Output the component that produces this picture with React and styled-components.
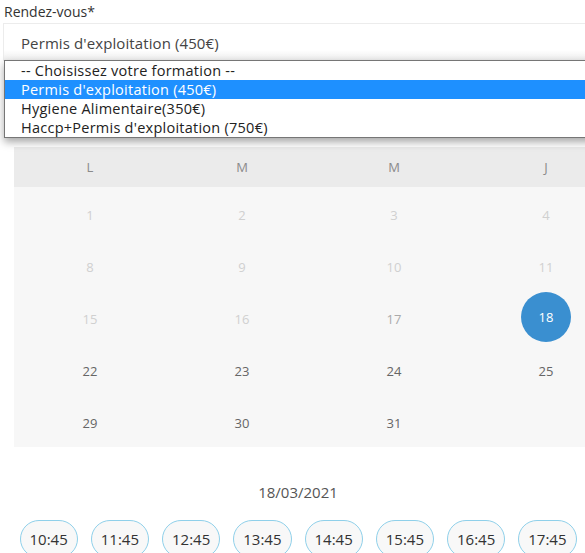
import React from "react";
import styled, { createGlobalStyle } from "styled-components";

const GlobalStyle = createGlobalStyle`
    body {
        margin: 0;
        background: #fff;
        overflow: hidden;
        font-family: "Open Sans", "Noto Sans", sans-serif;
    }
`;

const Page = styled.div`
    width: 1100px;
    position: relative;
`;

const Label = styled.div`
    font-size: 14px;
    color: #333;
    padding: 3px 0 0 4px;
    height: 20px;
    line-height: 17px;
`;

const SelectBox = styled.div`
    margin-left: 3px;
    height: 38px;
    border-top: 1px solid #ececec;
    border-left: 1px solid #ececec;
    box-sizing: border-box;
    display: flex;
    align-items: center;
    padding-left: 17px;
    font-size: 15px;
    letter-spacing: 0.1px;
    color: #444;
    background: linear-gradient(to bottom, #fff 0%, #fff 70%, #ececec 100%);
`;

const OptionList = styled.ul`
    position: absolute;
    top: 60px;
    left: 4px;
    width: 1000px;
    margin: 0;
    padding: 0;
    list-style: none;
    background: #fff;
    border: 1px solid #767676;
    box-shadow: 0 4px 8px rgba(0, 0, 0, 0.35);
    z-index: 2;
`;

const Option = styled.li`
    height: 19px;
    line-height: 19px;
    padding-left: 16px;
    font-size: 14.5px;
    letter-spacing: 0.25px;
    color: ${(p) => (p.$active ? "#fff" : "#222")};
    background: ${(p) => (p.$active ? "#1e90ff" : "transparent")};
`;

const Calendar = styled.div`
    margin: 86px 0 0 14px;
    width: 1064px;
`;

const HeadRow = styled.div`
    display: grid;
    grid-template-columns: repeat(7, 152px);
    height: 40px;
    background: #ebebeb;
    align-items: center;
    text-align: center;
    font-size: 13px;
    color: #8a8a8a;
`;

const Body = styled.div`
    display: grid;
    grid-template-columns: repeat(7, 152px);
    grid-auto-rows: 52px;
    background: #f7f7f7;
`;

const Day = styled.div`
    display: flex;
    align-items: center;
    justify-content: center;
    padding-top: 3px;
    font-size: 13px;
    color: ${(p) => p.$color};
`;

const Selected = styled.span`
    width: 50px;
    height: 50px;
    margin-top: -3px;
    border-radius: 50%;
    background: #3a8fd0;
    color: #fff;
    display: flex;
    align-items: center;
    justify-content: center;
`;

const Slots = styled.div`
    width: 596px;
    text-align: center;
    padding-top: 35px;
`;

const SlotDate = styled.div`
    font-size: 15px;
    color: #555;
    height: 20px;
    line-height: 20px;
    margin-bottom: 18px;
`;

const SlotRow = styled.div`
    display: flex;
    justify-content: center;
    gap: 13px;
`;

const Slot = styled.button`
    height: 38px;
    padding: 0 9px;
    border: 1px solid #8fd0ea;
    border-radius: 19px;
    background: #f8f8f8;
    font-family: inherit;
    font-size: 15px;
    color: #333;
`;

const options = [
    "-- Choisissez votre formation --",
    "Permis d'exploitation (450€)",
    "Hygiene Alimentaire(350€)",
    "Haccp+Permis d'exploitation (750€)",
];

const weekDays = ["L", "M", "M", "J", "V", "S", "D"];
const slots = ["10:45", "11:45", "12:45", "13:45", "14:45", "15:45", "16:45", "17:45"];

const dayColor = (d) => {
    if (d < 17) return "#d0d0d0";
    if (d === 17) return "#aaa";
    return "#666";
};

const App = () => {
    const days = Array.from({ length: 31 }, (_, i) => i + 1);
    return (
        <Page>
            <GlobalStyle />
            <Label>Rendez-vous*</Label>
            <SelectBox>Permis d'exploitation (450€)</SelectBox>
            <OptionList>
                {options.map((o, i) => (
                    <Option key={o} $active={i === 1}>
                        {o}
                    </Option>
                ))}
            </OptionList>
            <Calendar>
                <HeadRow>
                    {weekDays.map((w, i) => (
                        <div key={i}>{w}</div>
                    ))}
                </HeadRow>
                <Body>
                    {days.map((d) => (
                        <Day key={d} $color={dayColor(d)}>
                            {d === 18 ? <Selected>{d}</Selected> : d}
                        </Day>
                    ))}
                </Body>
            </Calendar>
            <Slots>
                <SlotDate>18/03/2021</SlotDate>
                <SlotRow>
                    {slots.map((s) => (
                        <Slot key={s}>{s}</Slot>
                    ))}
                </SlotRow>
            </Slots>
        </Page>
    );
};

export default App;
